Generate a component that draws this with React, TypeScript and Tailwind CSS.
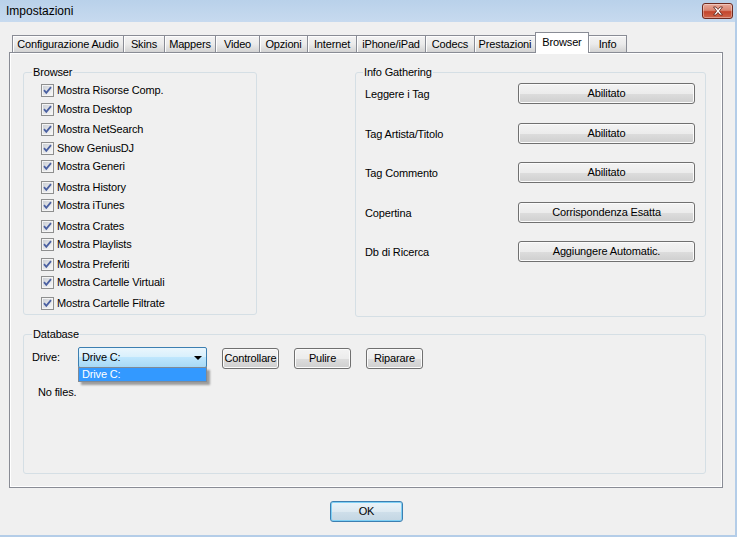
import React from 'react';

const tabs = [
  { label: 'Configurazione Audio', w: 'w-[112px]' },
  { label: 'Skins', w: 'w-[42px]' },
  { label: 'Mappers', w: 'w-[52px]' },
  { label: 'Video', w: 'w-[45px]' },
  { label: 'Opzioni', w: 'w-[49px]' },
  { label: 'Internet', w: 'w-[50px]' },
  { label: 'iPhone/iPad', w: 'w-[70px]' },
  { label: 'Codecs', w: 'w-[50px]' },
  { label: 'Prestazioni', w: 'w-[62px]' },
  { label: 'Browser', w: 'w-[54px]', active: true },
  { label: 'Info', w: 'w-[39px]' },
];

// spacing between rows is not regular in the original dialog
const browserItems = [
  { label: 'Mostra Risorse Comp.', gap: 'mt-0' },
  { label: 'Mostra Desktop', gap: 'mt-[1px]' },
  { label: 'Mostra NetSearch', gap: 'mt-[2px]' },
  { label: 'Show GeniusDJ', gap: 'mt-[1px]' },
  { label: 'Mostra Generi', gap: 'mt-0' },
  { label: 'Mostra History', gap: 'mt-[3px]' },
  { label: 'Mostra iTunes', gap: 'mt-0' },
  { label: 'Mostra Crates', gap: 'mt-[3px]' },
  { label: 'Mostra Playlists', gap: 'mt-0' },
  { label: 'Mostra Preferiti', gap: 'mt-[2px]' },
  { label: 'Mostra Cartelle Virtuali', gap: 'mt-0' },
  { label: 'Mostra Cartelle Filtrate', gap: 'mt-[3px]' },
];

const infoRows = [
  { label: 'Leggere i Tag', value: 'Abilitato', h: 'h-[40px]' },
  { label: 'Tag Artista/Titolo', value: 'Abilitato', h: 'h-[39px]' },
  { label: 'Tag Commento', value: 'Abilitato', h: 'h-[40px]' },
  { label: 'Copertina', value: 'Corrispondenza Esatta', h: 'h-[39px]' },
  { label: 'Db di Ricerca', value: 'Aggiungere Automatic.', h: 'h-[39px]' },
];

const Btn = ({ children, className = '' }: { children: React.ReactNode; className?: string }) => (
  <button
    type="button"
    className={`flex items-center justify-center rounded-[3px] border border-[#707070] bg-[linear-gradient(to_bottom,#f3f3f3_0%,#ececec_50%,#dddddd_51%,#cfcfcf_100%)] shadow-[inset_0_0_0_1px_#fbfbfb] leading-none ${className}`}
  >
    {children}
  </button>
);

const Check = () => (
  <svg width="13" height="13" viewBox="0 0 13 13" className="shrink-0">
    <defs>
      <linearGradient id="cb" x1="0" y1="0" x2="1" y2="1">
        <stop offset="0" stopColor="#cbcfd5" />
        <stop offset="1" stopColor="#f7f7f7" />
      </linearGradient>
    </defs>
    <rect x="0.5" y="0.5" width="12" height="12" fill="#f4f4f4" stroke="#8e8f8f" />
    <rect x="2" y="2" width="9" height="9" fill="url(#cb)" />
    <path d="M3 6.2 L5.3 8.8 L10 3.2" fill="none" stroke="#4a60a1" strokeWidth="1.8" />
  </svg>
);

export default function App() {
  return (
    <div className="w-[737px] h-[537px] bg-[#f0f0f0] border-r-2 border-b-2 border-[#b4cde8] flex flex-col text-[11px] leading-[13px] text-black font-[family-name:'Liberation_Sans',Arial,sans-serif] tracking-[-0.15px] overflow-hidden">
      {/* title bar */}
      <div className="h-[22px] shrink-0 flex items-center justify-between pl-[6px] pr-[2px] bg-gradient-to-b from-[#b9d1ea] to-[#c7daef]">
        <span className="text-[12px] tracking-normal">Impostazioni</span>
        <div className="w-[31px] h-[16px] rounded-[3px] border border-[#6e2a20] bg-[linear-gradient(to_bottom,#e9a99a_0%,#d98672_45%,#c4452c_55%,#d0664c_100%)] flex items-center justify-center shadow-[inset_0_0_0_1px_rgba(255,255,255,0.35)]">
          <svg width="12" height="10" viewBox="0 0 12 10">
            <path
              d="M1.5 1 L4 1 L6 3.4 L8 1 L10.5 1 L7.4 5 L10.5 9 L8 9 L6 6.6 L4 9 L1.5 9 L4.6 5 Z"
              fill="#ffffff"
              stroke="#5a1f17"
              strokeWidth="0.8"
            />
          </svg>
        </div>
      </div>

      {/* tab strip */}
      <div className="relative z-10 mt-[10px] h-[21px] pl-[12px] flex items-end">
        {tabs.map((t, i) =>
          t.active ? (
            <div
              key={t.label}
              className={`${t.w} ${i > 0 ? '-ml-px' : ''} h-[21px] border border-b-0 border-[#898c95] bg-white flex items-center justify-center pb-[1px] relative z-10`}
            >
              {t.label}
            </div>
          ) : (
            <div
              key={t.label}
              className={`${t.w} ${i > 0 ? '-ml-px' : ''} h-[17px] mb-px border border-b-0 border-[#898c95] bg-gradient-to-b from-[#f3f3f3] via-[#ebebeb] to-[#d3d3d3] flex items-center justify-center pt-[1px] shadow-[inset_1px_1px_0_#fdfdfd]`}
            >
              {t.label}
            </div>
          )
        )}
      </div>

      {/* tab panel */}
      <div className="-mt-px ml-[9px] w-[714px] h-[436px] shrink-0 border border-[#898c95] shadow-[inset_0_0_0_1px_#ffffff] pt-[13px] pl-[13px]">
        <div className="flex">
          <fieldset className="w-[234px] h-[249px] border border-[#d5dfe5] rounded-[3px]">
            <legend className="ml-[8px] px-[1px]">Browser</legend>
            <div className="flex flex-col pt-[2px]">
              {browserItems.map((b) => (
                <div key={b.label} className={`${b.gap} h-[18px] flex items-center gap-[3px] pl-[17px]`}>
                  <Check />
                  <span>{b.label}</span>
                </div>
              ))}
            </div>
          </fieldset>

          <fieldset className="ml-[98px] w-[351px] h-[251px] border border-[#d5dfe5] rounded-[3px]">
            <legend className="ml-[7px] px-[1px]">Info Gathering</legend>
            <div className="flex flex-col pt-[4px]">
              {infoRows.map((r) => (
                <div key={r.label} className={`${r.h} flex items-start`}>
                  <span className="w-[162px] pl-[9px] h-[21px] flex items-center pt-[1px]">{r.label}</span>
                  <Btn className="w-[177px] h-[21px]">{r.value}</Btn>
                </div>
              ))}
            </div>
          </fieldset>
        </div>

        <fieldset className="mt-[11px] w-[683px] h-[146px] border border-[#d5dfe5] rounded-[3px]">
          <legend className="ml-[8px] px-[1px]">Database</legend>
          <div className="pt-[6px] flex items-start">
            <span className="pl-[8px] w-[54px] h-[21px] flex items-center">Drive:</span>
            <div className="relative w-[129px] h-[21px]">
              <div className="h-full rounded-[2px] border border-[#3c7fb1] bg-[linear-gradient(to_bottom,#eaf6fd_0%,#d9f0fc_45%,#bee6fd_50%,#a7d9f5_100%)] flex items-center justify-between pl-[3px] pr-[4px]">
                <span>Drive C:</span>
                <svg width="8" height="4" viewBox="0 0 8 4">
                  <path d="M0 0 H8 L4 4 Z" fill="#000" />
                </svg>
              </div>
              <div className="absolute left-0 top-[20px] w-[129px] h-[15px] border border-[#7f8a96] bg-[#3399ff] text-white pl-[3px] flex items-center shadow-[3px_3px_2px_rgba(0,0,0,0.35)]">
                Drive C:
              </div>
            </div>
            <Btn className="ml-[15px] mt-[1px] w-[57px] h-[21px]">Controllare</Btn>
            <Btn className="ml-[15px] mt-[1px] w-[57px] h-[21px]">Pulire</Btn>
            <Btn className="ml-[15px] mt-[1px] w-[57px] h-[21px]">Riparare</Btn>
          </div>
          <div className="mt-[17px] pl-[14px]">No files.</div>
        </fieldset>
      </div>

      {/* footer */}
      <div className="mt-[13px] pl-[330px]">
        <button
          type="button"
          className="w-[73px] h-[21px] rounded-[3px] border border-[#3c7fb1] bg-[linear-gradient(to_bottom,#eaf4fa_0%,#dde9f1_50%,#cfdfea_51%,#c3d6e3_100%)] shadow-[inset_0_0_0_1px_#7fd0f5] flex items-center justify-center leading-none"
        >
          OK
        </button>
      </div>
    </div>
  );
}
